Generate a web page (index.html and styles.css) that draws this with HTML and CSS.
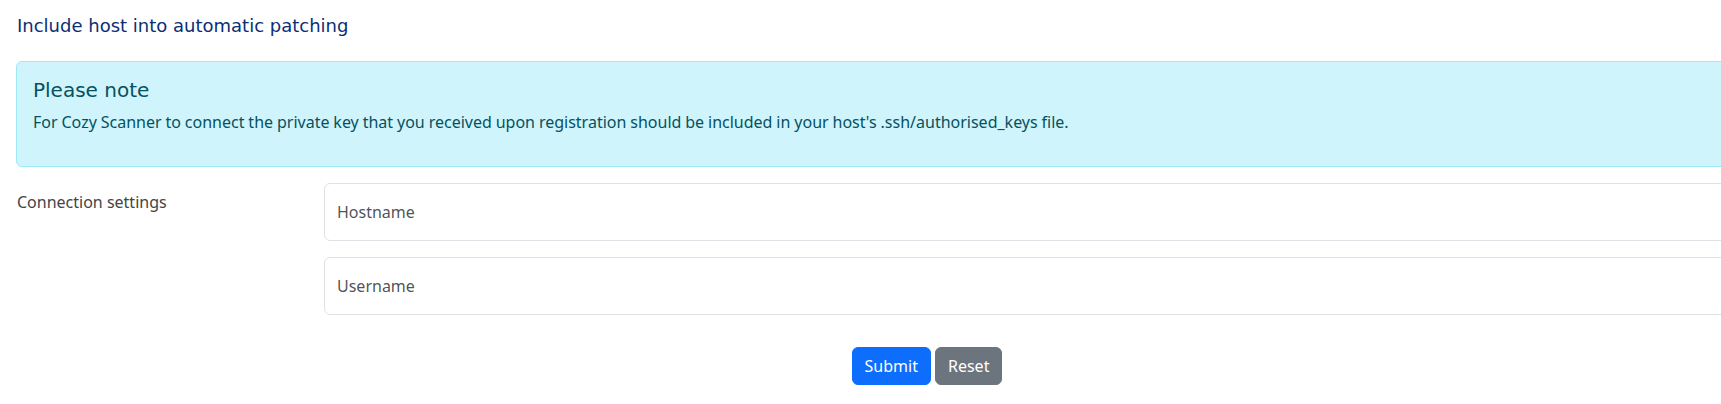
FILE: index.html
```html
<!DOCTYPE html>
<html lang="en">
<head>
<meta charset="utf-8">
<title>Include host into automatic patching</title>
<link rel="stylesheet" href="styles.css">
</head>
<body>
<div class="page">
  <h1 class="page-title">Include host into automatic patching</h1>
  <div class="alert">
    <h4 class="alert-heading">Please note</h4>
    <p class="alert-text">For Cozy Scanner to connect the private key that you received upon registration should be included in your host's .ssh/authorised_keys file.</p>
  </div>
  <form class="form">
    <div class="form-row">
      <label class="col-label">Connection settings</label>
      <div class="fields">
        <div class="floating">
          <input class="control" type="text" id="hostname" placeholder="Hostname">
          <label class="float-label" for="hostname">Hostname</label>
        </div>
        <div class="floating">
          <input class="control" type="text" id="username" placeholder="Username">
          <label class="float-label" for="username">Username</label>
        </div>
      </div>
    </div>
    <div class="actions">
      <button type="submit" class="btn btn-primary">Submit</button>
      <button type="reset" class="btn btn-secondary">Reset</button>
    </div>
  </form>
</div>
</body>
</html>
```
FILE: styles.css
```css
html, body {
  margin: 0;
  padding: 0;
  overflow: hidden;
  background: #fff;
}
body {
  font-family: "Noto Sans", "Open Sans", sans-serif;
  font-size: 16px;
  line-height: 1.5;
  color: #212529;
}
.page {
  width: 1822px;
  padding: 15px 0 0 16px;
}
.page-title {
  font-family: "DejaVu Sans", sans-serif;
  font-size: 18px;
  font-weight: 400;
  line-height: 1.2;
  color: #0b2f73;
  margin: 0 0 24px 1px;
}
.alert {
  background: #cff4fc;
  border: 1px solid #9eeaf9;
  border-radius: 6px;
  color: #055160;
  padding: 16px;
  margin-bottom: 16px;
}
.alert-heading {
  font-family: "DejaVu Sans", sans-serif;
  font-size: 20px;
  font-weight: 400;
  line-height: 1.2;
  margin: 0 0 8px;
}
.alert-text {
  margin: 0 0 16px;
  word-spacing: -0.25px;
}
.form-row {
  display: grid;
  grid-template-columns: 308px 1fr;
}
.col-label {
  padding-top: 7px;
  padding-left: 1px;
  color: #444;
}
.floating {
  position: relative;
  margin-bottom: 16px;
}
.control {
  display: block;
  box-sizing: border-box;
  width: 100%;
  height: 58px;
  padding: 16px 12px;
  font: inherit;
  color: #212529;
  background: #fff;
  border: 1px solid #dee2e6;
  border-radius: 6px;
  outline: none;
}
.control::placeholder {
  color: transparent;
}
.float-label {
  position: absolute;
  top: 0;
  left: 0;
  height: 100%;
  padding: 16px 12px;
  border: 1px solid transparent;
  box-sizing: border-box;
  color: rgba(33, 37, 41, 0.8);
  pointer-events: none;
  white-space: nowrap;
}
.actions {
  display: flex;
  justify-content: center;
  gap: 4px;
  margin-top: 16px;
}
.btn {
  font: inherit;
  color: #fff;
  padding: 6px 12px;
  border: 1px solid transparent;
  border-radius: 6px;
  line-height: 1.5;
  cursor: pointer;
}
.btn-primary {
  background: #0d6efd;
  border-color: #0d6efd;
}
.btn-secondary {
  background: #6c757d;
  border-color: #6c757d;
}
```
